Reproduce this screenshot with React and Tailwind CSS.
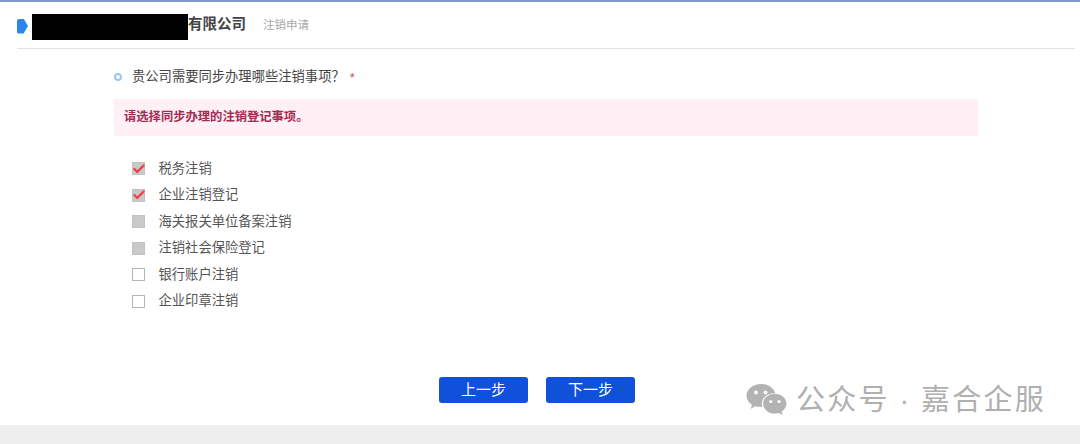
import { Check } from 'lucide-react'

const font = { fontFamily: '"Liberation Sans", "Noto Sans CJK SC", sans-serif' }

const items = [
  { label: '税务注销', state: 'checked' },
  { label: '企业注销登记', state: 'checked' },
  { label: '海关报关单位备案注销', state: 'disabled' },
  { label: '注销社会保险登记', state: 'disabled' },
  { label: '银行账户注销', state: 'empty' },
  { label: '企业印章注销', state: 'empty' },
]

function Box({ state }) {
  if (state === 'empty') return <span className="w-[13px] h-[13px] border border-[#b5b5b5] bg-white" />
  return (
    <span className="w-[13px] h-[13px] bg-[#c9c9c9] border border-[#c2c2c2] flex items-center justify-center">
      {state === 'checked' && <Check size={14} strokeWidth={4} className="text-[#ea4449] shrink-0" />}
    </span>
  )
}

function WeChat() {
  return (
    <svg width="41" height="33" viewBox="0 0 41 33" fill="#b3b3b3">
      <path d="M15 0C6.9 0 0.5 5.2 0.5 11.7c0 3.7 2.1 6.7 5.5 9L4.7 24.8l4.9-2.5c1.8.4 3.3.7 5.2.7.5 0 1 0 1.4-.1-.3-.9-.4-1.900-.4-2.900C15.800 14 21.200 9.200 28 9.200c.5 0 .9 0 1.300.1C27.900 3.900 22 0 15 0z" />
      <path d="M40.500 19.700c0-5.500-5.500-9.900-11.700-9.900-6.500 0-11.700 4.400-11.700 9.900s5.200 9.900 11.700 9.900c1.400 0 2.700-.3 4-.7l3.800 2.200-1-3.500c2.900-2.100 4.900-4.800 4.900-7.900z" />
      <circle cx="10" cy="8.500" r="1.900" fill="#fff" />
      <circle cx="19.500" cy="8.500" r="1.900" fill="#fff" />
      <circle cx="24.800" cy="17.500" r="1.600" fill="#fff" />
      <circle cx="33" cy="17.500" r="1.600" fill="#fff" />
    </svg>
  )
}

export default function App() {
  return (
    <div style={font} className="relative w-[1080px] h-[444px] overflow-hidden bg-white flex flex-col">
      <div className="h-[2px] bg-[#7f9ac6] shrink-0" />

      <div className="h-[47px] ml-[17px] mr-[5px] border-b border-[#e2e2e2] flex items-center shrink-0">
        <span className="w-[11px] h-[15px] bg-[#2f86ea] rounded-l-[2px] [clip-path:polygon(0_0,60%_0,100%_50%,60%_100%,0_100%)] mt-[2px]" />
        <span className="w-[156px] h-[26px] bg-black ml-[4px] mt-[4px]" />
        <span className="text-[14.500px] leading-none font-bold text-[#444] mt-[-1px]">有限公司</span>
        <span className="text-[11.500px] leading-none text-[#a8a8a8] ml-[17px] mt-[2px]">注销申请</span>
      </div>

      <div className="ml-[114px] w-[864px] flex flex-col flex-1">
        <div className="flex items-center h-[20px] mt-[18px]">
          <span className="w-[8px] h-[8px] rounded-full border-2 border-[#9cc8f0] mr-[10px]" />
          <span className="text-[13.300px] leading-none text-[#444]">贵公司需要同步办理哪些注销事项？</span>
          <span className="text-[13px] leading-none text-[#e5484d] ml-[5px]">*</span>
        </div>

        <div className="h-[37px] mt-[12px] bg-[#fef0f4] flex items-center pl-[10px]">
          <span className="text-[12.300px] leading-none font-bold text-[#a62b52]">请选择同步办理的注销登记事项。</span>
        </div>

        <div className="flex flex-col mt-[26px] pl-[18px] gap-[13.500px]">
          {items.map(item => (
            <div key={item.label} className="flex items-center h-[13px]">
              <Box state={item.state} />
              <span className="text-[13.300px] leading-none text-[#555] ml-[13.500px]">{item.label}</span>
            </div>
          ))}
        </div>

        <div className="flex justify-center gap-[18px] mt-[69px] pr-[18px]">
          <button className="w-[89px] h-[26px] rounded-[3px] bg-[#0f52d9] text-white text-[15px] leading-none">上一步</button>
          <button className="w-[89px] h-[26px] rounded-[3px] bg-[#0f52d9] text-white text-[15px] leading-none">下一步</button>
        </div>
      </div>

      <div className="h-[19px] bg-[#eeeeee] shrink-0" />

      <div className="absolute left-[746px] top-[384px] flex items-center text-[#b0b0b0]">
        <WeChat />
        <span className="text-[29px] leading-none tracking-[2.300px] ml-[9px] whitespace-nowrap">公众号</span>
        <span className="text-[29px] leading-none w-[31px] text-center pr-[2px]">·</span>
        <span className="text-[29px] leading-none tracking-[2.300px] whitespace-nowrap">嘉合企服</span>
      </div>
    </div>
  )
}
